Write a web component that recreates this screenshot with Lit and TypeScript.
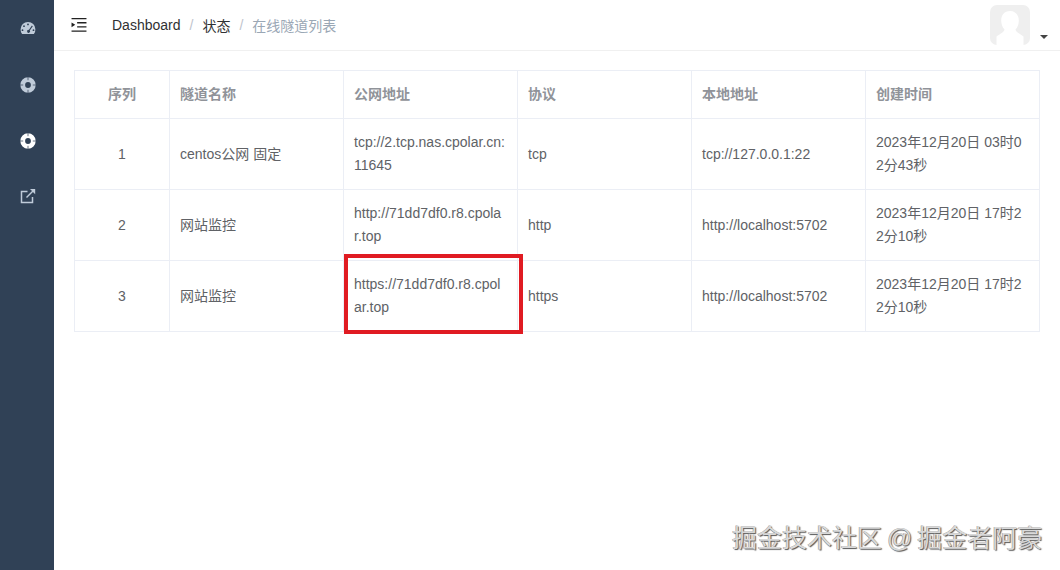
import { LitElement, html, css, svg } from "lit";
import { customElement } from "lit/decorators.js";

const rows = [
  ["1", "centos公网 固定", "tcp://2.tcp.nas.cpolar.cn:11645", "tcp", "tcp://127.0.0.1:22", "2023年12月20日 03时02分43秒"],
  ["2", "网站监控", "http://71dd7df0.r8.cpolar.top", "http", "http://localhost:5702", "2023年12月20日 17时22分10秒"],
  ["3", "网站监控", "https://71dd7df0.r8.cpolar.top", "https", "http://localhost:5702", "2023年12月20日 17时22分10秒"],
];
const heads = ["序列", "隧道名称", "公网地址", "协议", "本地地址", "创建时间"];

const ring = svg`<circle cx="8" cy="8" r="5.300" fill="none" stroke="currentColor" stroke-width="4.800"/><path d="M8 0v3.200M8 12.800V16M0 8h3.200M12.800 8H16" stroke="#304156" stroke-width="1" opacity=".7"/>`;

@customElement("app-root")
export class AppRoot extends LitElement {
  static styles = css`
    :host { display: flex; width: 1060px; height: 570px; position: relative; overflow: hidden; background: #fff;
      font-family: "Liberation Sans", "Noto Sans CJK SC", sans-serif; font-size: 14px; color: #676a6c; }
    .side { width: 54px; flex: none; background: #304156; display: flex; flex-direction: column; align-items: center; padding: 20px 0 0 2px; gap: 40px; box-sizing: border-box; }
    .side svg { display: block; width: 16px; height: 16px; color: #bfcbd9; overflow: visible; }
    .side .on { color: #fff; }
    .main { flex: 1; min-width: 0; display: flex; flex-direction: column; }
    .top { height: 51px; box-sizing: border-box; border-bottom: 1px solid #f0f0f0; display: flex; align-items: center; padding: 0 12px 0 17px; }
    .burger { width: 16px; height: 14px; margin-top: -1px; margin-right: 25px; flex: none; display: block; }
    .crumbs { display: flex; align-items: center; color: #303133; margin-top: -1px; }
    .sep { color: #c0c4cc; margin: 0 9px; }
    .cur { color: #9aa7b5; }
    .user { margin-left: auto; display: flex; align-items: flex-end; gap: 10px; }
    .avatar { width: 40px; height: 40px; display: block; }
    .caret { width: 0; height: 0; border: 4px solid transparent; border-top-color: #444; border-bottom: 0; margin-bottom: 6px; }
    .content { padding: 19px 20px 0 20px; }
    table { border-collapse: collapse; table-layout: fixed; width: 966px; }
    th, td { border: 1px solid #ebeef5; padding: 0 10px; text-align: left; word-break: break-all; line-height: 23px; font-weight: 400; }
    th { height: 47px; font-weight: 700; color: #909399; }
    td { height: 70px; color: #606266; }
    td:last-child { padding-right: 13px; }
    .c { text-align: center; }
    .mark { position: absolute; left: 344px; top: 254px; width: 179px; height: 80px; box-sizing: border-box; border: 4px solid #e01b22; pointer-events: none; }
    .wm { position: absolute; left: 732px; top: 522px; font-size: 25px; line-height: 32px; color: #d9d9d9; white-space: nowrap; word-spacing: -2px;
      text-shadow: 1px 1px 1px #555, -0.5px -0.5px 0 #999; }
  `;

  render() {
    return html`
      <nav class="side">
        <svg viewBox="0 -.3 16 16"><path fill="currentColor" fill-rule="evenodd" d="M8 1.600A7.400 7.400 0 0 0 .6 9c0 1.900.6 3.500 1.500 4.800h11.800A7.600 7.600 0 0 0 15.400 9 7.400 7.400 0 0 0 8 1.600zM8 3.200a.9.9 0 1 1 0 1.800.9.9 0 0 1 0-1.800zM4 5a.9.9 0 1 1 0 1.800A.9.9 0 0 1 4 5zm7.900.3.9.6-3 4.300a1.500 1.500 0 1 1-1-.6zM2.500 9a.9.9 0 1 1 0 1.800.9.9 0 0 1 0-1.800zm11 0a.9.9 0 1 1 0 1.800.9.9 0 0 1 0-1.800z"/></svg>
        <svg viewBox="0 -1 16 16">${ring}</svg>
        <svg class="on" viewBox="0 -1 16 16">${ring}</svg>
        <svg viewBox="0 0 16 16"><path fill="none" stroke="currentColor" stroke-width="1.500" d="M7.500 3.500H1.500v11h11V9"/><path fill="none" stroke="currentColor" stroke-width="1.500" d="M6.500 9.500 14 2"/><path fill="currentColor" d="M10 1h5.200v5.200z"/></svg>
      </nav>
      <div class="main">
        <header class="top">
          <svg class="burger" viewBox="0 0 16 15"><path fill="#222" d="M0 0h16v1.400H0zM6 4.400h10v1.400H6zM6 8.800h10v1.400H6zM0 13.400h16v1.400H0zM0 4.800l4 2.500-4 2.500z"/></svg>
          <div class="crumbs"><span>Dashboard</span><span class="sep">/</span><span>状态</span><span class="sep">/</span><span class="cur">在线隧道列表</span></div>
          <div class="user">
            <svg class="avatar" viewBox="0 0 40 40"><rect width="40" height="40" rx="7" fill="#efefef"/><path fill="#fff" d="M20 6c5.500 0 8.800 4 8.800 9.500 0 3.500-1.200 7-3.300 9 .3 2.500 4.500 4.500 8 7V40H6.500v-8.500c3.500-2.500 7.700-4.500 8-7-2.100-2-3.300-5.500-3.300-9C11.200 10 14.500 6 20 6z"/></svg>
            <span class="caret"></span>
          </div>
        </header>
        <div class="content">
          <table>
            <colgroup><col style="width:95px"/><col style="width:174px"/><col style="width:174px"/><col style="width:174px"/><col style="width:174px"/><col style="width:174px"/></colgroup>
            <thead><tr>${heads.map((h, i) => html`<th class=${i === 0 ? "c" : ""}>${h}</th>`)}</tr></thead>
            <tbody>${rows.map((r) => html`<tr>${r.map((v, i) => html`<td class=${i === 0 ? "c" : ""}>${v}</td>`)}</tr>`)}</tbody>
          </table>
        </div>
      </div>
      <div class="mark"></div>
      <div class="wm">掘金技术社区 @ 掘金者阿豪</div>
    `;
  }
}
